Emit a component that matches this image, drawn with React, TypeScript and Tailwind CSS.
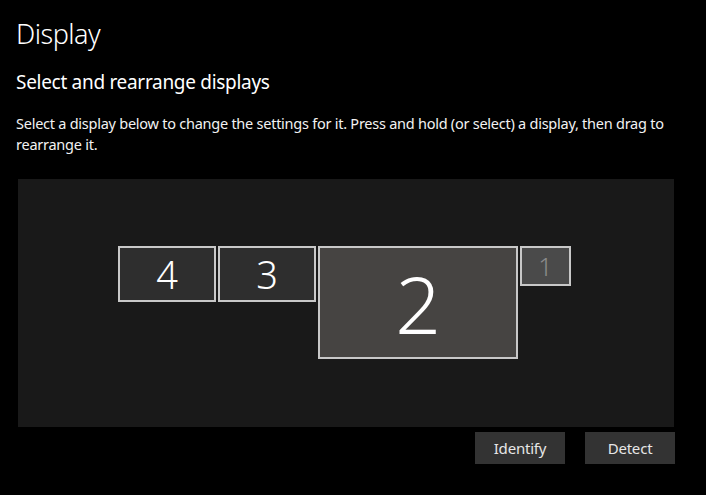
export default function App() {
  return (
    <div className="min-h-screen w-full bg-black text-white px-4 pt-[14px] font-['Noto_Sans','Open_Sans',sans-serif]">
      <h1 className="text-[27px] font-light leading-[40px] tracking-[-0.5px]">Display</h1>
      <h2 className="mt-[14px] text-[19px] leading-[28px] tracking-[-0.3px]">Select and rearrange displays</h2>
      <p className="mt-[17px] text-[14.5px] leading-[21px] tracking-[-0.25px] text-[#f2f2f2] max-w-[670px]">
        Select a display below to change the settings for it. Press and hold (or select) a display, then drag to
        rearrange it.
      </p>

      <div className="mt-[24px] ml-[2px] w-[656px] h-[248px] bg-[#191919] pl-[100px] pt-[67px]">
        <div className="flex items-start gap-[2px]">
          <Monitor w="w-[98px]" h="h-[56px]" bg="bg-[#2e2e2e]" text="text-[38px] text-white">4</Monitor>
          <Monitor w="w-[98px]" h="h-[56px]" bg="bg-[#2e2e2e]" text="text-[38px] text-white">3</Monitor>
          <Monitor w="w-[200px]" h="h-[113px]" bg="bg-[#464442]" text="text-[80px] text-white">2</Monitor>
          <Monitor w="w-[51px]" h="h-[40px]" bg="bg-[#4a4a4a]" text="text-[25px] text-[#8c8c8c]">1</Monitor>
        </div>
      </div>

      <div className="mt-[5px] w-[659px] flex justify-end gap-5">
        <button className="w-[90px] h-[32px] bg-[#333333] text-[15px] tracking-[-0.2px] text-[#e6e6e6]">Identify</button>
        <button className="w-[90px] h-[32px] bg-[#333333] text-[15px] tracking-[-0.2px] text-[#e6e6e6]">Detect</button>
      </div>
    </div>
  );
}

function Monitor({
  w,
  h,
  bg,
  text,
  children,
}: {
  w: string;
  h: string;
  bg: string;
  text: string;
  children: React.ReactNode;
}) {
  return (
    <div className={`${w} ${h} ${bg} border-2 border-[#c8c8c8] flex items-center justify-center`}>
      <span className={`${text} font-light leading-none`}>{children}</span>
    </div>
  );
}
